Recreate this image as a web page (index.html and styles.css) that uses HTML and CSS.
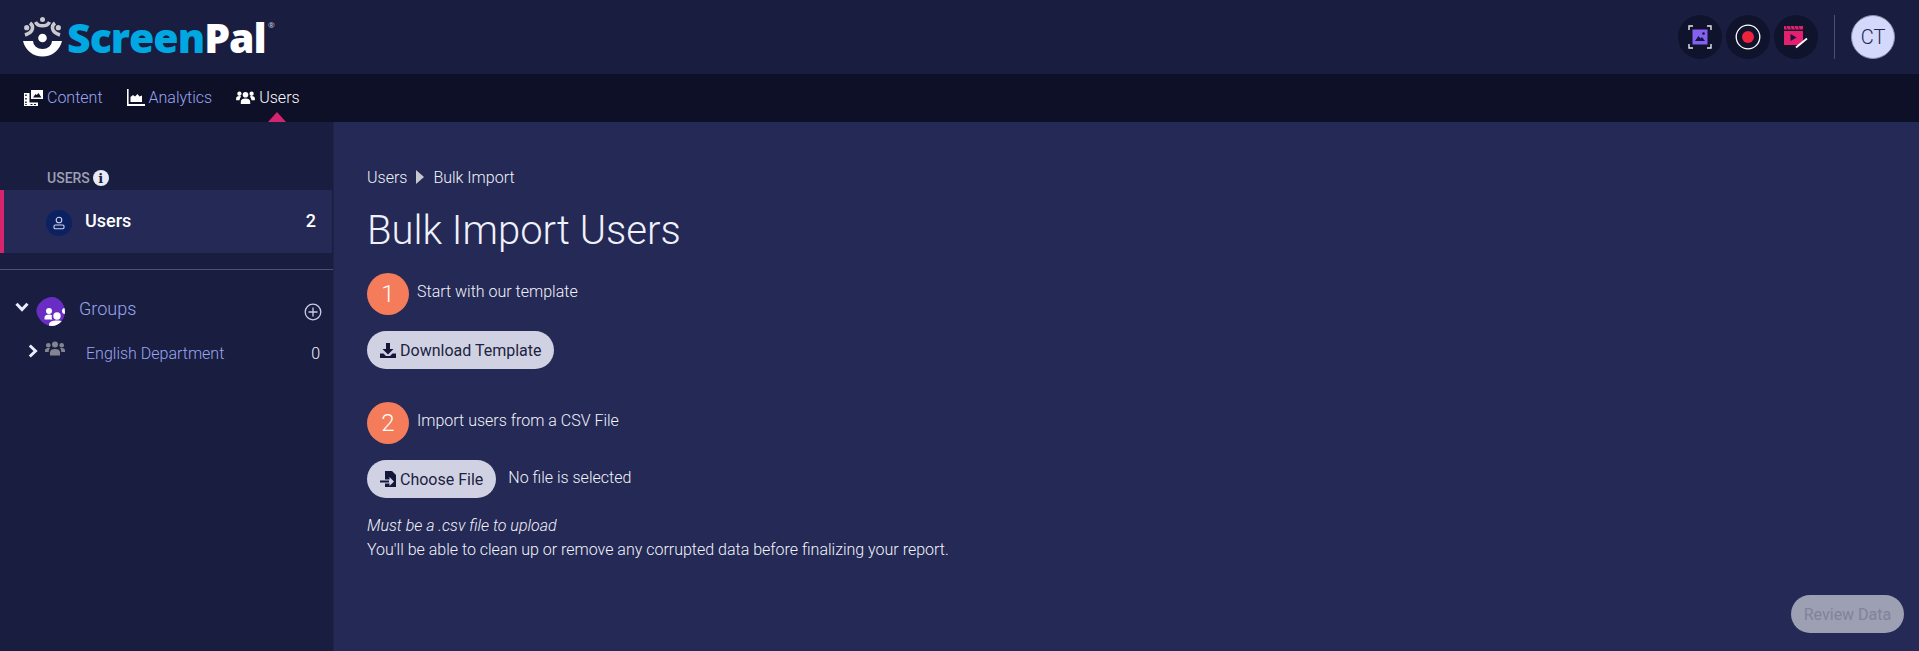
FILE: index.html
```html
<!DOCTYPE html>
<html lang="en">
<head>
<meta charset="utf-8">
<title>Bulk Import Users</title>
<link rel="stylesheet" href="styles.css">
</head>
<body>
<header class="topbar">
  <a class="logo">
    <svg class="logo-mark" viewBox="0 0 39 40" width="39" height="40">
      <g fill="none" stroke="#c9c9cf" stroke-width="3.500">
        <path d="M12.500 5A7.500 6 0 0 0 26.500 5"/>
        <path d="M7 6C11 9 11 15 2 18"/>
        <path d="M32 6C28 9 28 15 37 18"/>
      </g>
      <circle cx="19.500" cy="2.500" r="2.500" fill="#c9c9cf"/>
      <circle cx="3.700" cy="10.700" r="2.600" fill="#c9c9cf"/>
      <circle cx="35.300" cy="10.700" r="2.600" fill="#c9c9cf"/>
      <circle cx="19.500" cy="21" r="4.300" fill="#fff"/>
      <path d="M0 24A20 20 0 0 0 39 24H29A9.500 8 0 0 1 10 24Z" fill="#fff"/>
    </svg>
    <span class="logo-word"><span class="logo-screen">Screen</span><span class="logo-pal">Pal</span><sup class="logo-reg">®</sup></span>
  </a>
  <div class="top-actions">
    <span class="round-btn">
      <svg viewBox="0 0 24 24" width="24" height="24">
        <rect x="4.500" y="4.500" width="15" height="15" fill="#8660f0"/>
        <path d="M7 16l3.500-5 2 2.500 1.500-1.500 3 4z" fill="#14163a"/>
        <circle cx="15.500" cy="8.500" r="1.300" fill="#14163a"/>
        <path d="M1 5V1h4M19 1h4v4M23 19v4h-4M5 23H1v-4" fill="none" stroke="#e8e8ee" stroke-width="1.400"/>
      </svg>
    </span>
    <span class="round-btn">
      <svg viewBox="0 0 26 26" width="26" height="26">
        <circle cx="13" cy="13" r="11.800" fill="none" stroke="#fff" stroke-width="1.300"/>
        <circle cx="13" cy="13" r="6" fill="#f0233c"/>
      </svg>
    </span>
    <span class="round-btn">
      <svg viewBox="0 0 26 24" width="26" height="24">
        <rect x="1" y="1" width="19" height="3.500" fill="#e5206f"/>
        <path d="M3 1l1.500 3.500M7 1l1.500 3.500M11 1l1.500 3.500M15 1l1.500 3.500" stroke="#14163a" stroke-width=".8"/>
        <path d="M1 6h19v9.500l-4 4.500H1z" fill="#e5206f"/>
        <path d="M7.500 9l6 3.500-6 3.500z" fill="#14163a"/>
        <path d="M13 22.500l11-9" stroke="#fff" stroke-width="1.800"/>
      </svg>
    </span>
    <span class="top-sep"></span>
    <span class="avatar">CT</span>
  </div>
</header>
<nav class="tabs">
  <a class="tab">
    <svg viewBox="0 0 19 17" width="19" height="17" fill="#fff">
      <path d="M7 1h12v9H7zM9 8.500h8.500L14.500 4 12.800 6 11.500 5z" fill-rule="evenodd"/>
      <path d="M0 4h5.500v9.500H14V17H0zM1.200 5.500v1.500h1.500V5.500zM1.200 9v1.500h1.500V9zM1.200 12.500V14h1.500v-1.500zM1.200 15v1h1.500v-1zM6.500 15v1h2v-1zM10 15v1h2v-1z" fill-rule="evenodd"/>
    </svg>
    <span>Content</span>
  </a>
  <a class="tab">
    <svg viewBox="0 0 18 17" width="18" height="17" fill="#fff">
      <path d="M0 0h1.600v15H18v2H0z"/>
      <path d="M3.500 13V8l2.500-2 2 1.500L10.500 5l2 2.500 2.500-1V13z"/>
    </svg>
    <span>Analytics</span>
  </a>
  <a class="tab tab-active">
    <svg viewBox="0 0 20 16" width="19" height="15" fill="#fff">
      <circle cx="10" cy="5" r="3"/><circle cx="3.500" cy="4" r="2.300"/><circle cx="16.500" cy="4" r="2.300"/>
      <path d="M5 15v-2.500C5 10 7 9 10 9s5 1 5 3.500V15zM0 11V9c0-1.500 1-2.500 3.500-2.500 1 0 1.500.2 2 .5C4.500 8 3.700 9.500 3.700 11zM20 11V9c0-1.500-1-2.500-3.500-2.500-1 0-1.500.2-2 .5 1 1 1.800 2.500 1.800 4z"/>
    </svg>
    <span>Users</span>
  </a>
</nav>
<div class="shell">
  <aside class="sidebar">
    <div class="side-label">USERS <span class="info">i</span></div>
    <div class="side-active">
      <span class="user-badge">
        <svg viewBox="0 0 14 14" width="14" height="14" fill="none" stroke="#cfd3ee" stroke-width="1.100">
          <circle cx="7" cy="4" r="2.800"/>
          <rect x="2" y="9" width="10" height="3.800" rx="1.200"/>
        </svg>
      </span>
      <span class="side-active-name">Users</span>
      <span class="side-active-count">2</span>
    </div>
    <div class="side-rule"></div>
    <div class="group-head">
      <svg class="chev-down" viewBox="0 0 14 10" width="14" height="10" fill="none" stroke="#e8eefc" stroke-width="3"><path d="M1.500 1.800L7 7.500l5.500-5.700"/></svg>
      <svg class="group-blob" viewBox="0 0 29 29" width="29" height="29">
        <clipPath id="blob-clip"><path d="M16 0C23 0 29 7 29 15C29 22 23 29 16 29C9 29 2 23 0.500 15C-0.500 8 8 0 16 0Z"/></clipPath>
        <g clip-path="url(#blob-clip)">
          <rect width="29" height="29" fill="#6a2dc4"/>
          <g fill="#fff">
            <circle cx="13" cy="14" r="3"/><circle cx="21" cy="19" r="3.700"/><circle cx="29" cy="14" r="3"/>
            <path d="M8.500 22.500v-2c0-2 2-3 4.500-3 1.300 0 2.300.3 3 .8-.5 1.200-.5 3 .5 4.200z"/>
            <path d="M13 31v-3c0-3.500 3.500-4.500 8-4.500s8 1 8 4.500v3z"/>
          </g>
        </g>
      </svg>
      <span class="group-title">Groups</span>
      <svg class="group-add" viewBox="0 0 18 18" width="18" height="18" fill="none" stroke="#c9cce6" stroke-width="1.300"><circle cx="9" cy="9" r="7.800"/><path d="M9 4.500v9M4.500 9h9"/></svg>
    </div>
    <div class="group-row">
      <svg class="chev-right" viewBox="0 0 10 14" width="10" height="14" fill="none" stroke="#e8eefc" stroke-width="3"><path d="M1.800 1.500L7.500 7l-5.700 5.500"/></svg>
      <svg class="group-people" viewBox="0 0 20 15" width="20" height="15" fill="#85858f">
        <circle cx="10" cy="3.500" r="3"/><circle cx="3.300" cy="4.300" r="2.300"/><circle cx="16.700" cy="4.300" r="2.300"/>
        <path d="M5 14.500v-3C5 9 7 8 10 8s5 1 5 3.500v3zM0 11V9.500C0 8 1 7 3.300 7c.7 0 1.300.1 1.700.3C4 8.300 3.700 9.500 3.700 11zM20 11V9.500C20 8 19 7 16.700 7c-.7 0-1.300.1-1.700.3 1 1 1.300 2.200 1.300 3.700z"/>
      </svg>
      <span class="group-row-name">English Department</span>
      <span class="group-row-count">0</span>
    </div>
  </aside>
  <main class="main">
    <div class="crumbs">
      <span>Users</span>
      <svg viewBox="0 0 8 14" width="8" height="14" fill="#c8c8d0"><path d="M0 0l8 7-8 7z"/></svg>
      <span>Bulk Import</span>
    </div>
    <h1 class="title">Bulk Import Users</h1>
    <div class="step">
      <span class="step-num">1</span>
      <span class="step-text">Start with our template</span>
    </div>
    <button class="pill" type="button">
      <svg viewBox="0 0 16 15" width="16" height="15" fill="#14163a">
        <path d="M6 0h4v6h3.500L8 11.500 2.500 6H6z"/>
        <path d="M0 10.500h3.500L6 13h4l2.500-2.500H16V15H0z"/>
      </svg>
      Download Template
    </button>
    <div class="step step-second">
      <span class="step-num">2</span>
      <span class="step-text">Import users from a CSV File</span>
    </div>
    <div class="file-row">
      <button class="pill" type="button">
        <svg viewBox="0 0 16 16" width="16" height="16" fill="#14163a">
          <path d="M5 0h7l4 4v12H5v-3.500h4.500V15l4.500-4.500L9.500 6v2.500H5z"/>
          <path d="M0 9.500h9v2H0z"/>
        </svg>
        Choose File
      </button>
      <span class="file-status">No file is selected</span>
    </div>
    <p class="note"><em>Must be a .csv file to upload</em><br>You'll be able to clean up or remove any corrupted data before finalizing your report.</p>
    <button class="review" type="button">Review Data</button>
  </main>
</div>
</body>
</html>
```
FILE: styles.css
```css
* { box-sizing: border-box; }
html, body { margin: 0; height: 100%; }
body {
  width: 1919px;
  height: 651px;
  overflow: hidden;
  display: flex;
  flex-direction: column;
  font-family: Roboto, "Liberation Sans", sans-serif;
  font-size: 16px;
  color: #f2f3fb;
  background: #242955;
}
.topbar {
  height: 74px;
  flex: none;
  display: flex;
  align-items: center;
  justify-content: space-between;
  padding: 0 24px 0 23px;
  background: #191d40;
}
.logo { display: flex; align-items: center; gap: 5px; }
.logo-mark { display: block; margin-top: -1px; }
.logo-word {
  position: relative;
  font-family: "Open Sans", Lato, sans-serif;
  font-weight: 800;
  font-size: 41px;
  line-height: 44px;
  letter-spacing: -1px;
  margin-top: -1px;
}
.logo-screen { color: #00a7e1; }
.logo-pal { color: #fff; }
.logo-reg {
  position: absolute;
  left: 100%;
  top: 5px;
  margin-left: 2px;
  font-size: 8px;
  line-height: 10px;
  font-weight: 400;
  letter-spacing: 0;
  color: #d8d8e0;
}
.top-actions { display: flex; align-items: center; }
.round-btn {
  width: 44px;
  height: 44px;
  margin-right: 4px;
  border-radius: 50%;
  background: #10132c;
  display: flex;
  align-items: center;
  justify-content: center;
}
.top-sep {
  width: 1px;
  height: 44px;
  margin: 0 16px 0 12px;
  background: #4a4f78;
}
.avatar {
  width: 44px;
  height: 44px;
  border-radius: 50%;
  border: 1px solid #8d90a8;
  background: #d4d8fb;
  color: #20264f;
  display: flex;
  align-items: center;
  justify-content: center;
  font-size: 20px;
  font-weight: 300;
}
.tabs {
  height: 48px;
  flex: none;
  display: flex;
  align-items: center;
  gap: 24px;
  padding: 0 0 1px 24px;
  background: #0e1028;
}
.tab {
  position: relative;
  display: flex;
  align-items: center;
  gap: 4px;
  color: #9ba6ee;
  line-height: 20px;
  font-weight: 300;
}
.tab-active { color: #fff; }
.tab-active::after {
  content: "";
  position: absolute;
  left: 32px;
  bottom: -14px;
  border-left: 9px solid transparent;
  border-right: 9px solid transparent;
  border-bottom: 10px solid #d6246e;
}
.shell { flex: 1; display: flex; min-height: 0; }
.sidebar {
  width: 334px;
  flex: none;
  background: #191d40;
  padding-top: 44px;
  border-right: 1px solid #1f2349;
}
.side-label {
  height: 24px;
  padding-left: 47px;
  display: flex;
  align-items: center;
  gap: 3px;
  font-size: 14px;
  font-weight: 500;
  color: #9ea0b4;
}
.info {
  width: 16px;
  height: 16px;
  border-radius: 50%;
  background: #e8e9f5;
  color: #191d40;
  display: flex;
  align-items: center;
  justify-content: center;
  font-size: 13px;
  font-weight: 900;
  font-family: "DejaVu Serif", serif;
}
.side-active {
  height: 63px;
  margin-right: 1px;
  display: flex;
  align-items: center;
  padding: 0 16px 0 42px;
  border-left: 4px solid #d6246e;
  background: #242955;
}
.user-badge {
  width: 26px;
  height: 26px;
  margin-top: 3px;
  border-radius: 50%;
  background: #0c2161;
  display: flex;
  align-items: center;
  justify-content: center;
}
.side-active-name { margin: 0 0 2px 13px; font-size: 18px; font-weight: 500; color: #fff; flex: 1; }
.side-active-count { margin-bottom: 2px; font-size: 18px; font-weight: 500; color: #fff; }
.side-rule { height: 1px; margin-top: 16px; background: #4c5073; }
.group-head {
  height: 38px;
  margin-top: 22px;
  display: flex;
  align-items: center;
  padding: 0 11px 0 15px;
}
.chev-down { margin-top: -8px; }
.group-blob { flex: none; margin-left: 7px; }
.group-title { margin: 0 0 6px 14px; flex: 1; font-size: 18px; color: #9ba6ee; font-weight: 300; }
.group-add { margin-top: 2px; }
.group-row {
  height: 32px;
  margin-top: 7px;
  display: flex;
  align-items: center;
  padding: 0 13px 0 28px;
}
.chev-right { margin-top: -4px; }
.group-people { margin-left: 7px; margin-top: -10px; }
.group-row-name { margin-left: 21px; flex: 1; color: #9ba6ee; font-weight: 300; font-size: 16px; }
.group-row-count { color: #f2f3fb; font-size: 16px; font-weight: 300; }
.main {
  position: relative;
  flex: 1;
  padding: 44px 0 0 33px;
  background: #242955;
  font-weight: 300;
}
.crumbs {
  height: 22px;
  display: flex;
  align-items: center;
  gap: 9px;
  font-size: 16px;
}
.title {
  margin: 19px 0 0;
  font-size: 40px;
  line-height: 48px;
  font-weight: 300;
  color: #f0f1fa;
}
.step { display: flex; align-items: flex-start; margin-top: 18px; }
.step-second { margin-top: 33px; }
.step-num {
  width: 42px;
  height: 42px;
  border-radius: 50%;
  background: #f47c5b;
  color: #fff;
  display: flex;
  align-items: center;
  justify-content: center;
  font-size: 24px;
  font-weight: 300;
}
.step-text { margin-left: 8px; margin-top: 8px; line-height: 22px; }
.pill {
  height: 38px;
  padding: 0 13px;
  margin-top: 16px;
  border: 0;
  border-radius: 19px;
  background: #d0d2e3;
  color: #20223f;
  display: flex;
  align-items: center;
  gap: 4px;
  font-family: Roboto, "Liberation Sans", sans-serif;
  font-size: 16px;
  font-weight: 400;
}
.file-row { display: flex; align-items: center; }
.file-status { margin-left: 12px; margin-top: 12px; }
.note { margin: 16px 0 0; line-height: 24px; font-size: 16px; }
.review {
  position: absolute;
  right: 15px;
  bottom: 18px;
  width: 113px;
  height: 38px;
  border: 0;
  border-radius: 19px;
  background: #9d9fb2;
  color: #81839a;
  font-family: Roboto, "Liberation Sans", sans-serif;
  font-size: 16px;
  font-weight: 400;
  padding: 0;
}
```
